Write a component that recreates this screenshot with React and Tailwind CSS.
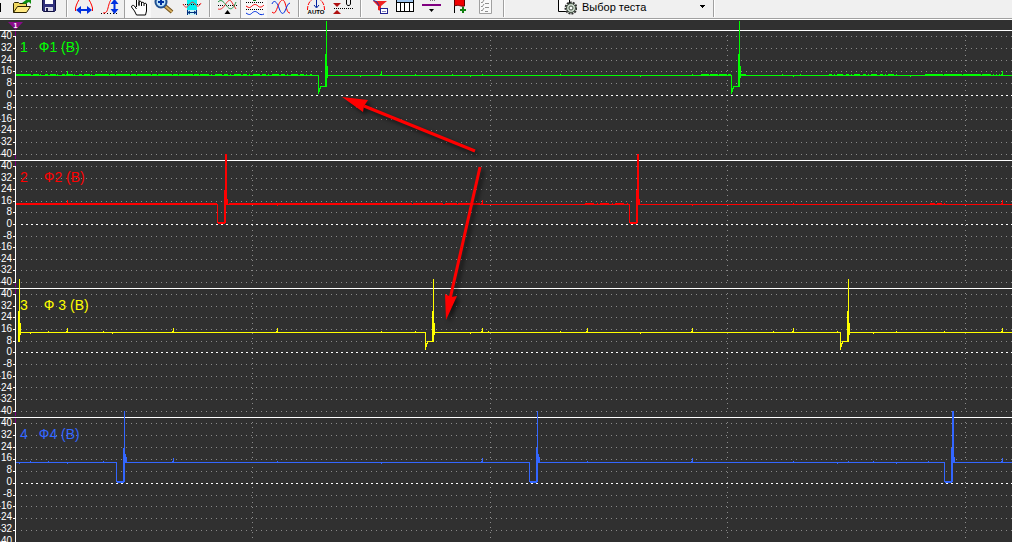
const LEVELS = [40, 32, 24, 16, 8, 0, -8, -16, -24, -32, -40]
const TIME_LINES = [252, 490, 727, 965]

// y values are measured from the top line of each channel
const CHANNELS = [
  {
    id: 1,
    name: 'Ф1 (В)',
    color: '#00ff00',
    height: 'h-[130px]',
    nameGap: 'gap-[11px]',
    step: 11.8,
    base: 45,
    top: -9,
    pulses: [318, 731],
    wide: [],
    kind: 'hook',
    low: 64,
    shelf: 56,
    ticks: [67, 381, 1002],
    specks: [360, 415, 452, 470, 482, 560, 640, 692, 782, 793, 800, 896, 910],
    noise: [
      [16, 28, 'none'],
      [28, 95, '3 2 6 1 1 4'],
      [95, 205, '14 1 5 1'],
      [205, 312, '4 2 1 3 7 2'],
      [701, 731, '8 1'],
      [741, 746, 'none'],
      [829, 895, '3 2 1 2 6 3'],
      [925, 990, '18 1'],
      [990, 1000, '1 2'],
    ],
  },
  {
    id: 2,
    name: 'Ф2 (В)',
    color: '#ff0000',
    height: 'h-[128px]',
    nameGap: 'gap-4',
    step: 11.6,
    base: 44,
    top: -6,
    pulses: [217, 629],
    wide: [217, 629],
    kind: 'box',
    low: 63,
    ticks: [67, 482, 1002],
    specks: [277, 381, 587, 692, 793],
    noise: [
      [16, 217, 'none'],
      [229, 400, 'none'],
      [400, 480, '12 1 30 2'],
      [585, 629, '9 3 1 2'],
      [930, 945, '5 2'],
    ],
  },
  {
    id: 3,
    name: 'Ф 3 (В)',
    color: '#ffff00',
    height: 'h-[129px]',
    nameGap: 'gap-4',
    step: 11.68,
    base: 44,
    top: -9,
    pulses: [11, 425, 840],
    wide: [],
    kind: 'hook',
    low: 62,
    shelf: 53,
    ticks: [67, 173, 277, 482, 587, 692, 793, 1002],
    specks: [30, 48, 103, 112, 381, 415, 470, 488, 560, 640, 773, 837, 873, 896, 944],
    noise: [],
  },
  {
    id: 4,
    name: 'Ф4 (В)',
    color: '#3366ff',
    height: 'h-[130px]',
    nameGap: 'gap-[11px]',
    step: 11.92,
    base: 45,
    top: -6,
    pulses: [116, 529, 944],
    wide: [944],
    kind: 'box',
    low: 65,
    ticks: [173, 482, 692, 1002],
    specks: [19, 30, 48, 67, 103, 277, 381, 587, 793, 837, 848, 873, 896, 928],
    noise: [],
  },
]

function pulsePath(ch, x) {
  const { base, top, low, shelf } = ch
  if (ch.kind === 'hook') {
    const drop = x > 16
      ? `M${x} ${base}h1V${low}h-1zM${x + 1} ${shelf + 2}h1v4h-1zM${x + 2} ${shelf}h5v1h-5zM${x + 2} ${shelf}h1v3h-1z`
      : ''
    return `${drop}M${x + 7} ${base - 21}h1V${shelf + 1}h-1zM${x + 8} ${top}h1V${shelf + 1}h-1zM${x + 9} ${base - 9}h1V${base + 3}h-1z`
  }
  const spike = ch.wide.includes(x) ? 2 : 1
  return `M${x} ${base}h1V${low}h-1zM${x + 1} ${low - 1}h7v2h-7zM${x + 7} ${base - 14}h1V${low}h-1zM${x + 8} ${top}h${spike}V${base}h-${spike}zM${x + 8} ${base}h1V${low}h-1zM${x + 9} ${base - 8}h1v8h-1zM${x + 10} ${base - 5}h1v6h-1z`
}

function Channel({ ch }) {
  const rows = LEVELS.map((level, i) => ({ level, y: Math.round(5.99 + i * ch.step) + 0.5 }))
  const starts = [16, ...ch.pulses.map((x) => x + 9)]
  const last = rows[rows.length - 1].y

  return (
    <section className={`relative flex-none border-t border-white ${ch.height}`}>
      <svg className="absolute inset-x-0 -top-px h-full w-full overflow-visible" shapeRendering="crispEdges">
        <line x1="15.5" x2="15.5" y1="1" y2="100%" stroke="#800080" />
        {TIME_LINES.map((x) => (
          <line key={x} x1={x + 0.5} x2={x + 0.5} y1="5" y2={last} stroke="#8a8a8a" strokeDasharray="1 4" />
        ))}
        {rows.map(({ level, y }) => (
          <g key={level}>
            <line x1="13" x2="16" y1={y} y2={y} stroke="#fff" />
            {level === 0 ? (
              <line x1="21" x2="100%" y1={y} y2={y} stroke="#fff" strokeDasharray="2 3" />
            ) : (
              <line x1="21" x2="100%" y1={y} y2={y} stroke="#8a8a8a" strokeDasharray="1 4" />
            )}
          </g>
        ))}
        <line x1="15.5" x2="15.5" y1="6" y2={last} stroke="#fff" />

        {starts.map((x, i) => (
          <line
            key={x}
            x1={x}
            x2={i < ch.pulses.length ? Math.max(ch.pulses[i], x) : '100%'}
            y1={ch.base + 0.5}
            y2={ch.base + 0.5}
            stroke={ch.color}
          />
        ))}
        {ch.noise.map(([from, to, dash]) => (
          <line key={from} x1={from} x2={to} y1={ch.base - 0.5} y2={ch.base - 0.5} stroke={ch.color} strokeDasharray={dash} />
        ))}
        <g fill={ch.color}>
          {ch.ticks.map((x) => (
            <path key={x} d={`M${x} ${ch.base - 4}h1v5h-1zM${x - 1} ${ch.base - 1}h1v2h-1z`} />
          ))}
          {ch.specks.map((x, i) => (
            <rect key={x} x={x} y={ch.base + (i % 3 ? -1 : 1)} width="1" height="1" />
          ))}
          {ch.pulses.map((x) => (
            <path key={x} d={pulsePath(ch, x)} />
          ))}
        </g>
      </svg>

      <div className="flex h-full pb-px">
        <ul className="flex w-3 flex-none flex-col justify-between text-[10px] leading-[10px] text-white">
          {LEVELS.map((level) => (
            <li key={level} className="flex justify-end">
              <span>{level}</span>
            </li>
          ))}
        </ul>
        <h2 className={`relative ml-2 mt-1.5 flex items-start text-sm leading-5 ${ch.nameGap}`} style={{ color: ch.color }}>
          <span>{ch.id}</span>
          <span>{ch.name}</span>
        </h2>
      </div>
    </section>
  )
}

function Tool({ label, active, children }) {
  return (
    <button
      type="button"
      aria-label={label}
      className={`h-[18px] w-[27px] flex-none ${active ? 'border-l border-[#a0a0a0] bg-[#f8f8f8]' : ''}`}
    >
      <svg width="27" height="18" viewBox="0 0 27 18" fill="none" className={active ? '-ml-px block' : 'block'}>
        {children}
      </svg>
    </button>
  )
}

function Separator() {
  return <span className="ml-1 mr-0.5 h-[17px] w-0.5 flex-none border-l border-[#a0a0a0] bg-white" />
}

function Toolbar() {
  return (
    <header className="flex h-5 flex-none overflow-hidden border-b border-white bg-[#f0f0f0] shadow-[inset_0_-1px_0_#a0a0a0]">
      <button type="button" aria-label="Новый" className="h-[18px] w-2 flex-none">
        <svg width="8" height="18" className="block">
          <rect y="3" width="1" height="9" fill="#000" />
        </svg>
      </button>
      <Tool label="Открыть">
        <path d="M5.500 12.500V3.500l1-1h4l1 1h7v3" fill="#f0d860" stroke="#2a2200" />
        <path d="M5.500 12.500l4-6h13l-4 6z" fill="#ffe880" stroke="#2a2200" />
        <path d="M14 3l4-3h5v4l-2-2-4 2z" fill="#109010" />
      </Tool>
      <Tool label="Сохранить">
        <path d="M7.500-2.500h13v13l-1 1h-11l-1-1z" fill="#30307c" stroke="#101040" />
        <rect x="10" y="-1" width="8" height="5" fill="#fff" />
        <rect x="10" y="7" width="8" height="4" fill="#d8d8e8" />
        <rect x="11" y="8" width="2" height="3" fill="#202050" />
      </Tool>
      <Separator />
      <Tool label="Период">
        <path d="M5.500 11V8c1-4 3-8 5-10M22.500 11V8c-1-4-3-8-5-10" stroke="#f00" />
        <path d="M8 10h12" stroke="#0030e0" strokeWidth="2" />
        <path d="M6 10l5-4v8zM22 10l-5-4v8z" fill="#0030e0" />
      </Tool>
      <Tool label="Амплитуда">
        <path d="M4 13.500h17" stroke="#000" strokeDasharray="1 2" />
        <path d="M6 13c3 0 4-1 5-5s2-8 4-9h4" stroke="#f00" />
        <path d="M17.500 2v9" stroke="#0030e0" strokeWidth="2" />
        <path d="M17.500-1l4 5h-8zM17.500 14l4-5h-8z" fill="#0030e0" />
      </Tool>
      <Tool label="Рука" active>
        <path
          d="M12.500-1v8M12.500 9l-2-3c-1-1-3-1-3 1l3 4 2 4h9l1-4V4c-.5-1-2-1-2.500 0M20 6V3c-.5-1-2-1-2.500 0v3M17.500 5V2c-.5-1-2-1-2.500 0v4M15 5V-1"
          fill="#fff"
          stroke="#000"
        />
      </Tool>
      <Tool label="Масштаб">
        <path d="M14 6l7 6" stroke="#70501c" strokeWidth="4" />
        <path d="M14 6l7 6" stroke="#d8b060" strokeWidth="2" />
        <circle cx="10" cy="2" r="5.500" fill="#bfe4fa" stroke="#205090" strokeWidth="2" />
        <path d="M7 2h6M10-1v6" stroke="#0030a0" strokeWidth="2" />
      </Tool>
      <Tool label="Выделение">
        <path d="M9 0h10v10h-10z" fill="#00f0f0" />
        <path d="M9 10h10v5h-10z" fill="#c8f4f8" />
        <path d="M5 4.500h18" stroke="#000" strokeDasharray="1 1" />
        <path d="M5 4c2 4 4 4 6 1s4-4 6-1 4 3 6-1" stroke="#f03030" />
        <path d="M9.500 10v5M18.500 10v5M10 12.500h8M12 11l-2 1.500 2 1.500M16 11l2 1.500-2 1.500" stroke="#003080" />
      </Tool>
      <Separator />
      <Tool label="Совместить">
        <path d="M5 5.500h19" stroke="#000" strokeDasharray="1 1" />
        <path d="M5 9c3 1 5-1 7-4s4-6 6-4l5 8" stroke="#f03030" />
        <path d="M5 2c3-3 5-1 8 3s6 7 10-3" stroke="#209040" />
        <path d="M14.500 10l3 4h-6z" fill="#000" />
      </Tool>
      <Tool label="Раздельно" active>
        <rect x="13" width="3" height="1" fill="#108020" />
        <path d="M6 2.500h18M6 9.500h18" stroke="#000" strokeDasharray="1 1" />
        <path d="M6 6c3 2 4 2 6 0s4-2 6 0 4 1 6-1" stroke="#f00" />
        <path d="M6 13c3 2 4 2 6 0s4-2 6 0 4 2 6 1" stroke="#0030e0" />
      </Tool>
      <Tool label="Наложить">
        <path d="M5 12c3 3 4-1 6-6s5-9 7-3 2 10 5 10" stroke="#f00" />
        <path d="M5 4c2-5 5-2 7 4s4 7 6 3 2-7 5-8" stroke="#0030e0" />
      </Tool>
      <Separator />
      <Tool label="Авто">
        <path d="M5.500 10c0-4 1-8 5-11M22.500 10c0-4-1-8-5-11" stroke="#f00" strokeDasharray="4 1" />
        <path d="M14.500 0v7M12 5l2.500 3L17 5" stroke="#0020a0" />
        <text x="14" y="14" textAnchor="middle" fontSize="6" fontWeight="bold" fill="#000">AUTO</text>
      </Tool>
      <Tool label="Установить ноль">
        <path d="M4 3h8L8 7zM4 14h8L8 10z" fill="#b01010" />
        <path d="M5 8.500h19" stroke="#000" strokeDasharray="1 1" />
        <path d="M17.500-2v6l1 1.500h2l1-1.500v-6" stroke="#000" />
      </Tool>
      <Separator />
      <Tool label="Фильтр">
        <path d="M9 1h14l-6 5v5l-3-1V6z" fill="#f02020" />
        <path d="M9 0l4 2 2 4" stroke="#2030a0" />
        <rect x="16.500" y="8.500" width="7" height="5" fill="#fff" stroke="#202090" />
        <path d="M18 11.500h4" stroke="#8080c0" />
      </Tool>
      <Tool label="Таблица">
        <rect x="5.500" y="-1.500" width="17" height="13" fill="#fff" stroke="#000" />
        <rect x="6" y="0" width="16" height="2" fill="#9cc4ee" />
        <path d="M6 2.500h16M9.500 2v9M13.500 2v9M18.500 2v9" stroke="#000" />
      </Tool>
      <Tool label="Уровень">
        <path d="M12 0h5" stroke="#000" strokeDasharray="1 1" />
        <path d="M4 5h19" stroke="#800080" strokeWidth="2" />
        <path d="M11 9h5l-2.500 3z" fill="#000" />
      </Tool>
      <Tool label="Маркер">
        <path d="M9.500 0v13" stroke="#000" />
        <path d="M9.500-1c4-2 6 2 10 0v7c-4 1-6-2-10 0z" fill="#f00000" stroke="#600000" />
        <path d="M18 7v6M15 10h6" stroke="#108010" strokeWidth="2" />
      </Tool>
      <Tool label="Список">
        <path d="M7.500-2v15.500h12V-2" fill="#fafafa" stroke="#a0a0a0" />
        <path d="M9 2l1 1 2-3M9 6l1 1 2-3M9 10l1 1 2-3M13 3.500h4M13 7.500h4M13 11.500h3" stroke="#909090" />
      </Tool>
      <Separator />

      <label className="relative flex h-[18px] w-[202px] flex-none items-center">
        <svg width="20" height="18" className="ml-[50px] block flex-none" fill="none">
          <path d="M1.500-1v12.500h11V-1" fill="#fff" stroke="#000" />
          <circle cx="14" cy="8" r="5.500" stroke="#303030" strokeWidth="2" strokeDasharray="2 1" />
          <circle cx="14" cy="8" r="4.500" fill="#ccd8cc" stroke="#405040" />
          <circle cx="14" cy="8" r="2" fill="#fff" stroke="#405040" />
        </svg>
        <select
          aria-label="Выбор теста"
          className="ml-[5px] h-[14px] flex-1 appearance-none self-start bg-transparent p-0 text-[11px] leading-[14px] text-black outline-none"
        >
          <option>Выбор теста</option>
        </select>
        <svg width="5" height="3" className="pointer-events-none absolute right-1 top-[5px]" shapeRendering="crispEdges">
          <path d="M0 0h5v1h-5zM1 1h3v1h-3zM2 2h1v1h-1z" fill="#000" />
        </svg>
      </label>
      <Separator />
    </header>
  )
}

function Arrow({ from, to, head }) {
  return (
    <g>
      <line x1={from[0]} y1={from[1]} x2={to[0]} y2={to[1]} stroke="#ff0000" strokeWidth="3" />
      <polygon points={head} fill="#ff0000" />
    </g>
  )
}

export default function App() {
  return (
    <div className="flex h-screen flex-col overflow-hidden bg-[#303030] font-['Liberation_Sans',Arial,sans-serif]">
      <Toolbar />
      <main className="relative flex min-h-0 flex-1 flex-col">
        <div className="h-[10px] flex-none pl-2">
          <svg width="16" height="10" className="block">
            <path d="M0 2h15L7.500 10z" fill="#8a0a8a" />
            <text x="7.500" y="8" textAnchor="middle" fontSize="7" fontWeight="bold" fill="#fff">1</text>
          </svg>
        </div>
        {CHANNELS.map((ch) => (
          <Channel key={ch.id} ch={ch} />
        ))}
        <svg className="pointer-events-none absolute inset-0 h-full w-full drop-shadow-[3px_3px_2px_rgba(0,0,0,0.6)]">
          <Arrow from={[475, 131]} to={[364, 86]} head="342,77 368,80 364,86 363,92" />
          <Arrow from={[480, 147]} to={[450, 279]} head="446,300 445,274 451,277 457,276" />
        </svg>
      </main>
    </div>
  )
}
